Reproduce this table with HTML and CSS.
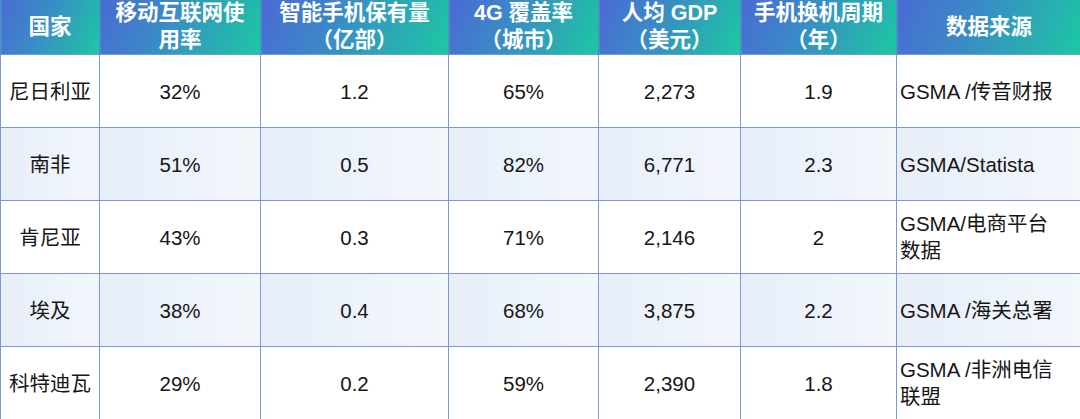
FILE: index.html
```html
<!DOCTYPE html>
<html lang="zh">
<head>
<meta charset="utf-8">
<link rel="stylesheet" href="styles.css">
</head>
<body>
<table class="data">
  <colgroup>
    <col class="c1"><col class="c2"><col class="c3"><col class="c4"><col class="c5"><col class="c6"><col class="c7">
  </colgroup>
  <thead>
    <tr>
      <th>国家</th>
      <th>移动互联网使<br>用率</th>
      <th>智能手机保有量<br>（亿部）</th>
      <th>4G 覆盖率<br>（城市）</th>
      <th>人均 GDP<br>（美元）</th>
      <th>手机换机周期<br>（年）</th>
      <th>数据来源</th>
    </tr>
  </thead>
  <tbody>
    <tr>
      <td>尼日利亚</td><td>32%</td><td>1.2</td><td>65%</td><td>2,273</td><td>1.9</td><td class="src">GSMA /传音财报</td>
    </tr>
    <tr class="alt">
      <td>南非</td><td>51%</td><td>0.5</td><td>82%</td><td>6,771</td><td>2.3</td><td class="src">GSMA/Statista</td>
    </tr>
    <tr>
      <td>肯尼亚</td><td>43%</td><td>0.3</td><td>71%</td><td>2,146</td><td>2</td><td class="src">GSMA/电商平台<br>数据</td>
    </tr>
    <tr class="alt">
      <td>埃及</td><td>38%</td><td>0.4</td><td>68%</td><td>3,875</td><td>2.2</td><td class="src">GSMA /海关总署</td>
    </tr>
    <tr>
      <td>科特迪瓦</td><td>29%</td><td>0.2</td><td>59%</td><td>2,390</td><td>1.8</td><td class="src">GSMA /非洲电信<br>联盟</td>
    </tr>
  </tbody>
</table>
</body>
</html>
```
FILE: styles.css
```css
html, body {
  margin: 0;
  padding: 0;
  background: #ffffff;
}
.data {
  width: 1081px;
  border-collapse: collapse;
  table-layout: fixed;
  font-family: "Liberation Sans", "Noto Sans CJK SC", sans-serif;
  font-size: 20.5px;
  color: #161616;
}
.c1 { width: 99px; }
.c2 { width: 161px; }
.c3 { width: 188px; }
.c4 { width: 150px; }
.c5 { width: 142px; }
.c6 { width: 156px; }
.c7 { width: 185px; }
.data th {
  height: 54px;
  padding: 0;
  line-height: 27px;
  color: #ffffff;
  font-weight: bold;
  font-size: 21.5px;
  text-align: center;
  background: linear-gradient(115deg, #4a6ad3 0%, #3a8ac6 40%, #1cc8a2 100%);
  border-left: 1px solid #5f86d4;
  border-right: 1px solid #5f86d4;
}
.data td {
  height: 72px;
  padding: 0;
  line-height: 27px;
  text-align: center;
  border: 1px solid #7a97d6;
}
.data tr.alt td {
  background: linear-gradient(90deg, #e8eef9 0%, #f1f7fb 100%);
}
.data td.src {
  text-align: left;
  padding-left: 3px;
}
```
